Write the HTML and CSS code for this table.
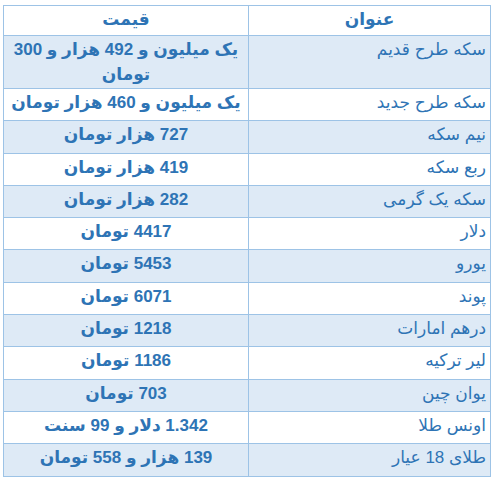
FILE: index.html
```html
<!DOCTYPE html>
<html lang="fa" dir="rtl">
<head>
<meta charset="utf-8">
<title>قیمت سکه و ارز</title>
<link rel="stylesheet" href="styles.css">
</head>
<body>
<table class="prices">
  <thead>
    <tr class="head">
      <th class="name-col">عنوان</th>
      <th class="value-col">قیمت</th>
    </tr>
  </thead>
  <tbody>
    <tr class="alt tall"><td class="name">سکه طرح قدیم</td><td class="value">یک میلیون و 492 هزار و 300 تومان</td></tr>
    <tr><td class="name">سکه طرح جدید</td><td class="value">یک میلیون و 460 هزار تومان</td></tr>
    <tr class="alt"><td class="name">نیم سکه</td><td class="value">727 هزار تومان</td></tr>
    <tr><td class="name">ربع سکه</td><td class="value">419 هزار تومان</td></tr>
    <tr class="alt"><td class="name">سکه یک گرمی</td><td class="value">282 هزار تومان</td></tr>
    <tr><td class="name">دلار</td><td class="value">4417 تومان</td></tr>
    <tr class="alt"><td class="name">یورو</td><td class="value">5453 تومان</td></tr>
    <tr><td class="name">پوند</td><td class="value">6071 تومان</td></tr>
    <tr class="alt"><td class="name">درهم امارات</td><td class="value">1218 تومان</td></tr>
    <tr><td class="name">لیر ترکیه</td><td class="value">1186 تومان</td></tr>
    <tr class="alt"><td class="name">یوان چین</td><td class="value">703 تومان</td></tr>
    <tr><td class="name">اونس طلا</td><td class="value">1.342 دلار و 99 سنت</td></tr>
    <tr class="alt"><td class="name">طلای 18 عیار</td><td class="value">139 هزار و 558 تومان</td></tr>
  </tbody>
</table>
</body>
</html>
```

FILE: styles.css
```css
html, body {
  margin: 0;
  padding: 0;
  background: #ffffff;
}

body {
  font-family: "Liberation Sans", "DejaVu Sans", sans-serif;
  color: #2e74b5;
}

.prices {
  direction: rtl;
  border-collapse: collapse;
  table-layout: fixed;
  width: 488px;
  margin: 5px 2px 0 2px;
}

.prices th,
.prices td {
  border: 1px solid #9dc3e6;
  padding: 1px 4px 0 4px;
  vertical-align: top;
  font-size: 17px;
  line-height: 25px;
}

.name-col {
  width: 233px;
}

.head th {
  height: 28px;
  font-weight: bold;
  text-align: center;
  padding-top: 1px;
}

.prices tbody tr {
  height: 32.3px;
}

.prices tbody tr.tall {
  height: 53px;
}

.alt td {
  background: #deeaf6;
}

.name {
  text-align: right;
  font-weight: normal;
  font-size: 17.5px;
}

.value {
  text-align: center;
  font-weight: bold;
  font-size: 18px;
}
```
